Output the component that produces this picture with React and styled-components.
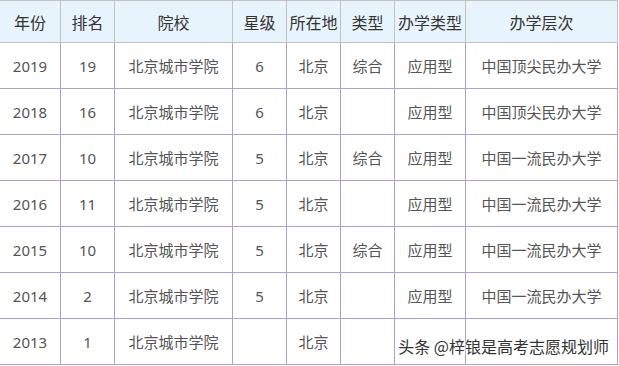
import React from 'react'
import styled, {createGlobalStyle} from 'styled-components'

const GlobalStyle = createGlobalStyle`
    html, body {
        margin: 0;
        padding: 0;
        background: #ffffff;
    }
    body {
        font-family: "Noto Sans", "Noto Sans CJK SC", sans-serif;
    }
`

const headers = ['年份', '排名', '院校', '星级', '所在地', '类型', '办学类型', '办学层次']
const widths = [60, 54, 118, 54, 54, 54, 71, 152]

const rows = [
    ['2019', '19', '北京城市学院', '6', '北京', '综合', '应用型', '中国顶尖民办大学'],
    ['2018', '16', '北京城市学院', '6', '北京', '', '应用型', '中国顶尖民办大学'],
    ['2017', '10', '北京城市学院', '5', '北京', '综合', '应用型', '中国一流民办大学'],
    ['2016', '11', '北京城市学院', '5', '北京', '', '应用型', '中国一流民办大学'],
    ['2015', '10', '北京城市学院', '5', '北京', '综合', '应用型', '中国一流民办大学'],
    ['2014', '2', '北京城市学院', '5', '北京', '', '应用型', '中国一流民办大学'],
    ['2013', '1', '北京城市学院', '', '北京', '', '', ''],
]

const Wrap = styled.div`
    position: relative;
    width: 619px;
    height: 366px;
    overflow: hidden;
`

const Table = styled.table`
    border-collapse: collapse;
    table-layout: fixed;
    width: 619px;
    margin-left: -1px;
`

const HeadCell = styled.th`
    height: 41px;
    padding: 0;
    background: #e8f4fc;
    border: 1px solid #c2c2c2;
    color: #333333;
    font-size: 16px;
    font-weight: normal;
    text-align: center;
    vertical-align: middle;
`

const Cell = styled.td`
    height: 45px;
    padding: 0;
    border: 1px solid #ab9fd4;
    color: #555555;
    font-size: 15px;
    text-align: center;
    vertical-align: middle;
`

const Watermark = styled.div`
    position: absolute;
    right: 10px;
    bottom: 8px;
    color: #333333;
    font-size: 16px;
    font-family: "Noto Sans CJK SC", sans-serif;
    text-shadow: 0 0 2px #ffffff, 0 0 2px #ffffff, 0 0 3px #ffffff;
    white-space: nowrap;
`

const App = () => {
    return (
        <Wrap>
            <GlobalStyle />
            <Table>
                <colgroup>
                    {widths.map((w, i) => (
                        <col key={i} style={{width: (i === 0 ? w + 1 : w) + 'px'}} />
                    ))}
                </colgroup>
                <thead>
                    <tr>
                        {headers.map((h, i) => <HeadCell key={i}>{h}</HeadCell>)}
                    </tr>
                </thead>
                <tbody>
                    {rows.map((row, r) => (
                        <tr key={r}>
                            {row.map((v, c) => <Cell key={c}>{v}</Cell>)}
                        </tr>
                    ))}
                </tbody>
            </Table>
            <Watermark>头条 @梓锒是高考志愿规划师</Watermark>
        </Wrap>
    )
}

export default App
